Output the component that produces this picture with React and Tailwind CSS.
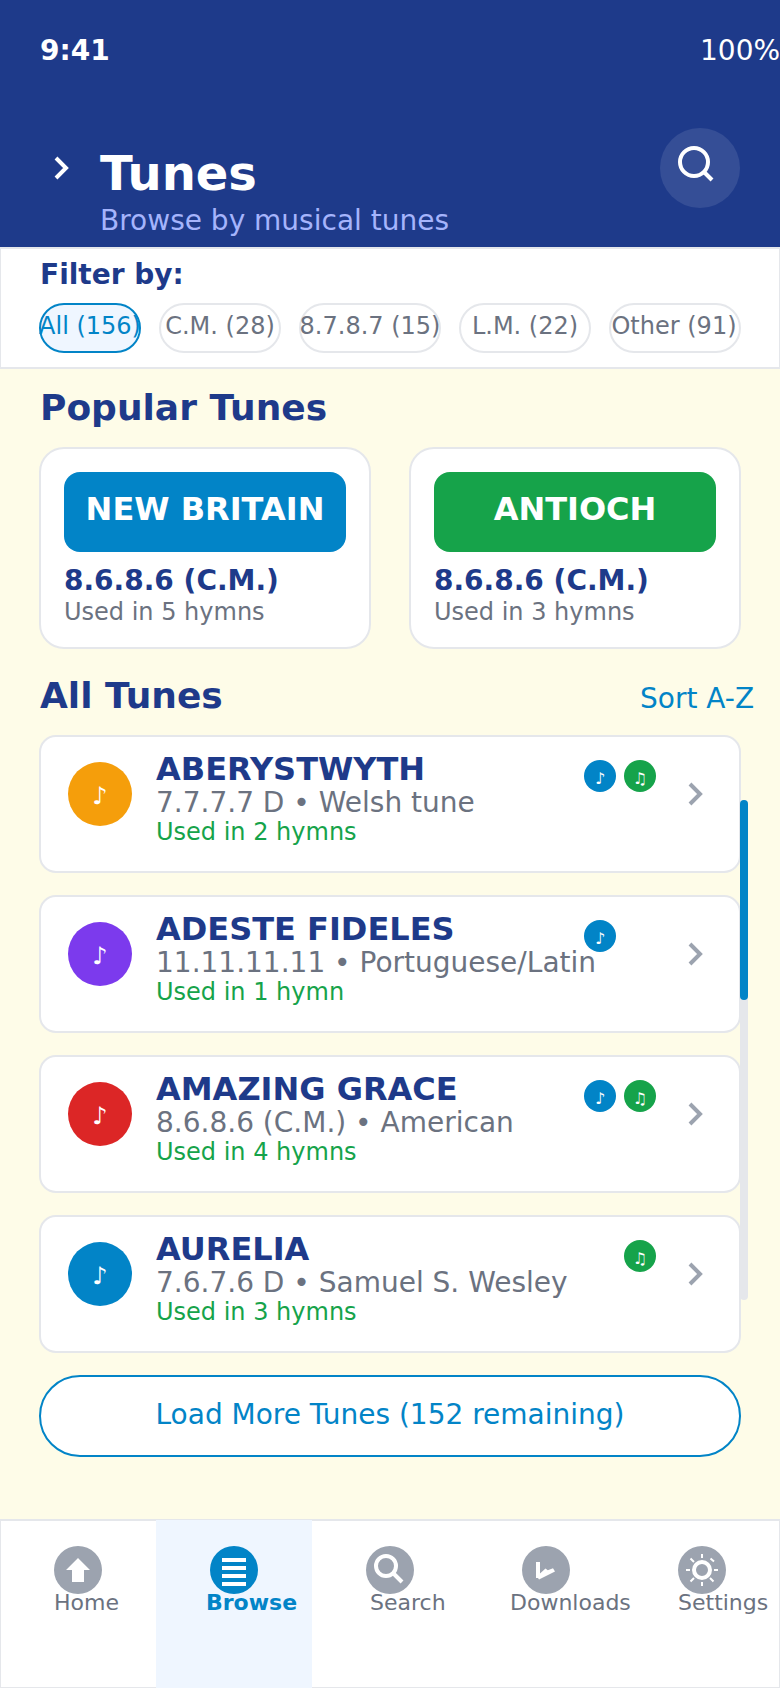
const tunes = [
  { name: 'ABERYSTWYTH', info: '7.7.7.7 D • Welsh tune', used: 'Used in 2 hymns', color: 'bg-[#f59e0b]', blue: true, green: true },
  { name: 'ADESTE FIDELES', info: '11.11.11.11 • Portuguese/Latin', used: 'Used in 1 hymn', color: 'bg-[#7c3aed]', blue: true, green: false },
  { name: 'AMAZING GRACE', info: '8.6.8.6 (C.M.) • American', used: 'Used in 4 hymns', color: 'bg-[#dc2626]', blue: true, green: true },
  { name: 'AURELIA', info: '7.6.7.6 D • Samuel S. Wesley', used: 'Used in 3 hymns', color: 'bg-[#0284c7]', blue: false, green: true },
];

const filters = [
  { label: 'All (156)', box: 'w-[102px] bg-[#eff6ff] border-[#0284c7] text-[#0284c7]' },
  { label: 'C.M. (28)', box: 'w-[122px] bg-white border-[#e5e7eb] text-[#6b7280]' },
  { label: '8.7.8.7 (15)', box: 'w-[142px] bg-white border-[#e5e7eb] text-[#6b7280]' },
  { label: 'L.M. (22)', box: 'w-[132px] bg-white border-[#e5e7eb] text-[#6b7280]' },
  { label: 'Other (91)', box: 'w-[132px] pr-[2px] bg-white border-[#e5e7eb] text-[#6b7280]' },
];

const popular = [
  { name: 'NEW BRITAIN', color: 'bg-[#0284c7]', used: 'Used in 5 hymns' },
  { name: 'ANTIOCH', color: 'bg-[#16a34a]', used: 'Used in 3 hymns' },
];

const tabs = [
  {
    label: 'Home', pad: 'pl-[54px]',
    icon: <path d="M24 12 36 24H30V36H18V24H12Z" fill="white" />,
  },
  {
    label: 'Browse', pad: 'pl-[50px]', active: true,
    icon: <path d="M12 12h24v4H12zM12 20h24v4H12zM12 28h24v4H12zM12 36h24v4H12z" fill="white" />,
  },
  {
    label: 'Search', pad: 'pl-[58px]',
    icon: (
      <g fill="none" stroke="white" strokeWidth="4">
        <circle cx="20" cy="20" r="10" />
        <path d="M27 27 36 36" />
      </g>
    ),
  },
  {
    label: 'Downloads', pad: 'pl-[42px]',
    icon: <path d="M14 16H18V27.5L23.5 22.4 25.8 24.3 31 22.2 33 25.6 17 33.6 16 32H14Z" fill="white" />,
  },
  {
    label: 'Settings', pad: 'pl-[54px]',
    icon: (
      <g fill="none" stroke="white" strokeWidth="2">
        <circle cx="24" cy="24" r="8" strokeWidth="4" />
        <path d="M24 8v4M24 36v4M8 24h4M36 24h4M12.5 12.5l3.5 3.5M32 32l3.5 3.5M12.5 35.5l3.5-3.5M32.5 12.5l3.5 3" />
      </g>
    ),
  },
];

function Chevron({ className }) {
  return (
    <svg viewBox="0 0 16 24" className={className} fill="none" stroke="currentColor" strokeWidth="4">
      <path d="M2 2 12 12 2 22" />
    </svg>
  );
}

function TuneRow({ tune }) {
  return (
    <div className="flex h-[138px] rounded-[17px] border-2 border-[#e5e7eb] bg-white pl-[25px]">
      <div className={`mt-[25px] h-16 w-16 shrink-0 rounded-full text-center text-2xl/[68px] text-white ml-[2px] ${tune.color}`}>♪</div>
      <div className="ml-6 flex w-[428px] shrink-0 flex-col whitespace-nowrap pt-[13px]">
        <div className="text-[32px]/[38px] font-bold text-[#1e3a8a]">{tune.name}</div>
        <div className="text-[28px]/[29px] text-[#6b7280]">{tune.info}</div>
        <div className="mt-px text-[24px]/[28px] text-[#16a34a]">{tune.used}</div>
      </div>
      <div className="relative mt-[23px] flex h-8 w-[72px] shrink-0 gap-2 text-center text-base/[38px] text-white">
        <div className={tune.blue ? 'w-8 rounded-full bg-[#0284c7]' : 'w-8'}>{tune.blue && '♪'}</div>
        {tune.green && <div className="w-8 rounded-full bg-[#16a34a]">♫</div>}
      </div>
      <Chevron className="ml-8 mt-[45px] h-6 w-4 text-[#9ca3af]" />
    </div>
  );
}

export default function App() {
  return (
    <div className="relative flex h-[1688px] w-[780px] flex-col overflow-hidden bg-[#fefce8] font-['DejaVu_Sans',sans-serif]">
      <header className="h-[247px] shrink-0 bg-[#1e3a8a] pl-10 text-white">
        <div className="flex justify-between pt-[34px] text-[28px]/[33px]">
          <span className="font-bold">9:41</span>
          <span className="w-20 whitespace-nowrap">100%</span>
        </div>
        <div className="flex pt-[61px]">
          <Chevron className="ml-[14px] mt-[28px] h-6 w-4" />
          <div className="ml-[30px] mt-[17px] w-[560px]">
            <h1 className="text-[48px]/[56px] font-bold">Tunes</h1>
            <p className="mt-[3px] text-[28px]/[33px] text-[#a5b4fc]">Browse by musical tunes</p>
          </div>
          <button className="h-20 w-20 rounded-full bg-white/10">
            <svg viewBox="0 0 80 80" className="h-20 w-20" fill="none" stroke="white" strokeWidth="4">
              <circle cx="34" cy="34" r="14" />
              <path d="M44 44 52 52" />
            </svg>
          </button>
        </div>
      </header>

      <section className="h-[122px] shrink-0 border-x border-y-2 border-[#e5e7eb] bg-white pl-[38px]">
        <h2 className="pl-px pt-[9px] text-[28px]/[33px] font-bold text-[#1e3a8a]">Filter by:</h2>
        <div className="mt-3 flex gap-[18px]">
          {filters.map((f) => (
            <div key={f.label} className={`flex h-[50px] shrink-0 justify-center whitespace-nowrap rounded-full border-2 text-[24px]/[42px] ${f.box}`}>
              {f.label}
            </div>
          ))}
        </div>
      </section>

      <main className="px-[39px]">
        <h2 className="pl-px pt-[18px] text-[36px]/[42px] font-bold text-[#1e3a8a]">Popular Tunes</h2>
        <div className="mt-[18px] flex gap-[38px]">
          {popular.map((p) => (
            <div key={p.name} className="h-[202px] w-[332px] rounded-[25px] border-2 border-[#e5e7eb] bg-white px-[23px] pt-[23px]">
              <div className={`h-20 rounded-2xl text-center text-[32px]/[74px] font-bold text-white ${p.color}`}>{p.name}</div>
              <div className="mt-3 text-[28px]/[33px] font-bold text-[#1e3a8a]">8.6.8.6 (C.M.)</div>
              <div className="mt-px text-[24px]/[28px] text-[#6b7280]">{p.used}</div>
            </div>
          ))}
        </div>
        <div className="mt-[25px] flex h-[61px] items-start">
          <h2 className="w-[601px] shrink-0 pl-px pt-px text-[36px]/[42px] font-bold text-[#1e3a8a]">All Tunes</h2>
          <span className="whitespace-nowrap pt-2 text-[28px]/[33px] text-[#0284c7]">Sort A-Z</span>
        </div>
        <div className="flex flex-col gap-[22px]">
          {tunes.map((t) => (
            <TuneRow key={t.name} tune={t} />
          ))}
        </div>
        <button className="mt-[22px] block h-[82px] w-full rounded-full border-2 border-[#0284c7] bg-white pb-[3px] text-center text-[28px]/[33px] text-[#0284c7]">
          Load More Tunes (152 remaining)
        </button>
      </main>

      <div className="absolute left-[740px] top-[800px] h-[500px] w-2 rounded bg-[#e5e7eb]">
        <div className="h-[200px] rounded bg-[#0284c7]" />
      </div>

      <nav className="relative mt-auto flex h-[169px] shrink-0 bg-white">
        <div className="absolute inset-0 border-x border-b border-t-2 border-[#e5e7eb]" />
        {tabs.map((t) => (
          <div key={t.label} className={t.active ? 'relative mt-px w-[156px] bg-[#eff6ff] pt-[26px]' : 'relative mt-px w-[156px] pt-[26px]'}>
            <svg viewBox="0 0 48 48" className={t.active ? 'ml-[54px] h-12 w-12 rounded-full bg-[#0284c7]' : 'ml-[54px] h-12 w-12 rounded-full bg-[#9ca3af]'}>
              {t.icon}
            </svg>
            <div className={`-mt-1 whitespace-nowrap text-[22px]/[25px] ${t.pad} ${t.active ? 'font-bold text-[#0284c7]' : 'text-[#6b7280]'}`}>{t.label}</div>
          </div>
        ))}
      </nav>
    </div>
  );
}
